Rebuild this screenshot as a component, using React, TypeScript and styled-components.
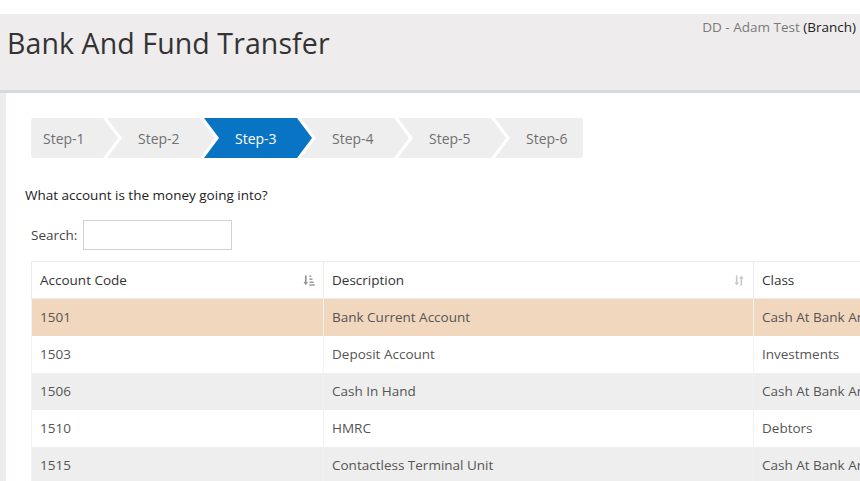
import styled, { createGlobalStyle } from "styled-components";

//************************************************************

const GlobalStyle = createGlobalStyle`
  html, body {
    margin: 0;
    padding: 0;
    background: #ffffff;
    overflow: hidden;
  }
  body {
    font-family: "Open Sans", "Liberation Sans", Arial, sans-serif;
    color: #333;
  }
`;

const Page = styled.div`
  width: 860px;
  height: 481px;
  padding-top: 14px;
  box-sizing: border-box;
  background: #ffffff;
  overflow: hidden;
`;

const Header = styled.div`
  display: flex;
  justify-content: space-between;
  align-items: flex-start;
  height: 76px;
  background-color: #eeecec;
  border-bottom: 3px solid #d6d9de;
`;

const Title = styled.h1`
  margin: 10px 0 0 7px;
  font-size: 28.5px;
  font-weight: 400;
  color: #333;
  letter-spacing: 0.1px;
`;

const UserInfo = styled.div`
  margin: 4px 4px 0 0;
  font-size: 13.5px;
  color: #7a7a7a;
  white-space: nowrap;
`;

const Branch = styled.span`
  color: #222;
`;

const Body = styled.div`
  display: flex;
  background-color: #eeecec;
  height: 100%;
`;

const Panel = styled.div`
  flex: 1;
  margin-left: 6px;
  background: #ffffff;
  padding: 25px 0 0 19px;
  overflow: hidden;
`;

const Steps = styled.div`
  display: flex;
  margin-left: 6px;
  height: 40px;
`;

const Step = styled.div<{ active?: boolean; first?: boolean; last?: boolean }>`
  box-sizing: border-box;
  height: 40px;
  display: flex;
  align-items: center;
  font-size: 14px;
  color: ${(p) => (p.active ? "#ffffff" : "#707070")};
  background-color: ${(p) => (p.active ? "#0a74c4" : "#eeeeee")};
  width: ${(p) => (p.first ? 87 : p.last ? 88 : 108)}px;
  margin-left: ${(p) => (p.first ? 0 : -11)}px;
  padding-left: ${(p) => (p.first ? 12 : 31)}px;
  border-radius: ${(p) => (p.first ? "3px 0 0 3px" : p.last ? "0 3px 3px 0" : "0")};
  clip-path: ${(p) =>
    p.first
      ? "polygon(0 0, calc(100% - 15px) 0, 100% 50%, calc(100% - 15px) 100%, 0 100%)"
      : p.last
      ? "polygon(0 0, 100% 0, 100% 100%, 0 100%, 15px 50%)"
      : "polygon(0 0, calc(100% - 15px) 0, 100% 50%, calc(100% - 15px) 100%, 0 100%, 15px 50%)"};
`;

const Question = styled.div`
  margin-top: 28px;
  font-size: 13.5px;
  line-height: 18px;
  color: #222;
`;

const SearchRow = styled.div`
  display: flex;
  align-items: center;
  gap: 6px;
  margin: 16px 0 0 6px;
  font-size: 13.5px;
  color: #444;
`;

const SearchInput = styled.input`
  width: 149px;
  height: 30px;
  box-sizing: border-box;
  border: 1px solid #d0d0d0;
  outline: none;
`;

const TableWrap = styled.div`
  margin: 11px 0 0 6px;
`;

const Table = styled.table`
  border-collapse: collapse;
  table-layout: fixed;
  width: 1022px;
  font-size: 13.5px;
`;

const HeadCell = styled.th`
  height: 37px;
  box-sizing: border-box;
  padding: 0 8px;
  text-align: left;
  font-weight: 400;
  color: #333;
  border-top: 1px solid #ececec;
  border-left: 1px solid #ececec;
  border-bottom: 1px solid #ececec;
`;

const HeadInner = styled.div`
  display: flex;
  justify-content: space-between;
  align-items: center;
`;

const Row = styled.tr<{ selected?: boolean; odd?: boolean }>`
  background-color: ${(p) => (p.selected ? "#f2d7bf" : p.odd ? "#efeeee" : "#ffffff")};
`;

const Cell = styled.td`
  height: 37px;
  box-sizing: border-box;
  padding: 0 8px;
  color: #555;
  border-left: 1px solid #f2f2f2;
  white-space: nowrap;
  overflow: hidden;
`;

const SortDesc = () => (
  <svg width="12" height="13" viewBox="0 0 13 13">
    <path d="M3 1v8.5" stroke="#8f8f8f" strokeWidth="1.7" fill="none" />
    <path d="M0.6 8l2.4 3.6L5.4 8z" fill="#8f8f8f" />
    <rect x="7" y="1" width="2" height="1.6" fill="#9a9a9a" />
    <rect x="7" y="4.3" width="3.3" height="1.6" fill="#9a9a9a" />
    <rect x="7" y="7.6" width="4.6" height="1.6" fill="#9a9a9a" />
    <rect x="7" y="10.6" width="5.8" height="1.6" fill="#9a9a9a" />
  </svg>
);

const SortBoth = () => (
  <svg width="12" height="13" viewBox="0 0 13 13">
    <path d="M4 1v9" stroke="#c8c8c8" strokeWidth="1.7" fill="none" />
    <path d="M1.6 8.5l2.4 3.5 2.4-3.5z" fill="#c8c8c8" />
    <path d="M9 3v9" stroke="#c8c8c8" strokeWidth="1.7" fill="none" />
    <path d="M6.6 4.5L9 1l2.4 3.5z" fill="#c8c8c8" />
  </svg>
);

const steps = ["Step-1", "Step-2", "Step-3", "Step-4", "Step-5", "Step-6"];

const accounts = [
  { code: "1501", desc: "Bank Current Account", cls: "Cash At Bank And In Hand" },
  { code: "1503", desc: "Deposit Account", cls: "Investments" },
  { code: "1506", desc: "Cash In Hand", cls: "Cash At Bank And In Hand" },
  { code: "1510", desc: "HMRC", cls: "Debtors" },
  { code: "1515", desc: "Contactless Terminal Unit", cls: "Cash At Bank And In Hand" },
];

export default function App() {
  return (
    <>
      <GlobalStyle />
      <Page>
        <Header>
          <Title>Bank And Fund Transfer</Title>
          <UserInfo>
            DD - Adam Test <Branch>(Branch)</Branch>
          </UserInfo>
        </Header>
        <Body>
          <Panel>
            <Steps>
              {steps.map((s, i) => (
                <Step key={s} first={i === 0} last={i === steps.length - 1} active={i === 2}>
                  {s}
                </Step>
              ))}
            </Steps>

            <Question>What account is the money going into?</Question>

            <SearchRow>
              Search:
              <SearchInput type="text" />
            </SearchRow>

            <TableWrap>
              <Table>
                <colgroup>
                  <col style={{ width: 292 }} />
                  <col style={{ width: 430 }} />
                  <col style={{ width: 300 }} />
                </colgroup>
                <thead>
                  <tr>
                    <HeadCell>
                      <HeadInner>
                        Account Code
                        <SortDesc />
                      </HeadInner>
                    </HeadCell>
                    <HeadCell>
                      <HeadInner>
                        Description
                        <SortBoth />
                      </HeadInner>
                    </HeadCell>
                    <HeadCell>
                      <HeadInner>
                        Class
                        <SortBoth />
                      </HeadInner>
                    </HeadCell>
                  </tr>
                </thead>
                <tbody>
                  {accounts.map((a, i) => (
                    <Row key={a.code} selected={i === 0} odd={i % 2 === 0}>
                      <Cell>{a.code}</Cell>
                      <Cell>{a.desc}</Cell>
                      <Cell>{a.cls}</Cell>
                    </Row>
                  ))}
                </tbody>
              </Table>
            </TableWrap>
          </Panel>
        </Body>
      </Page>
    </>
  );
}
